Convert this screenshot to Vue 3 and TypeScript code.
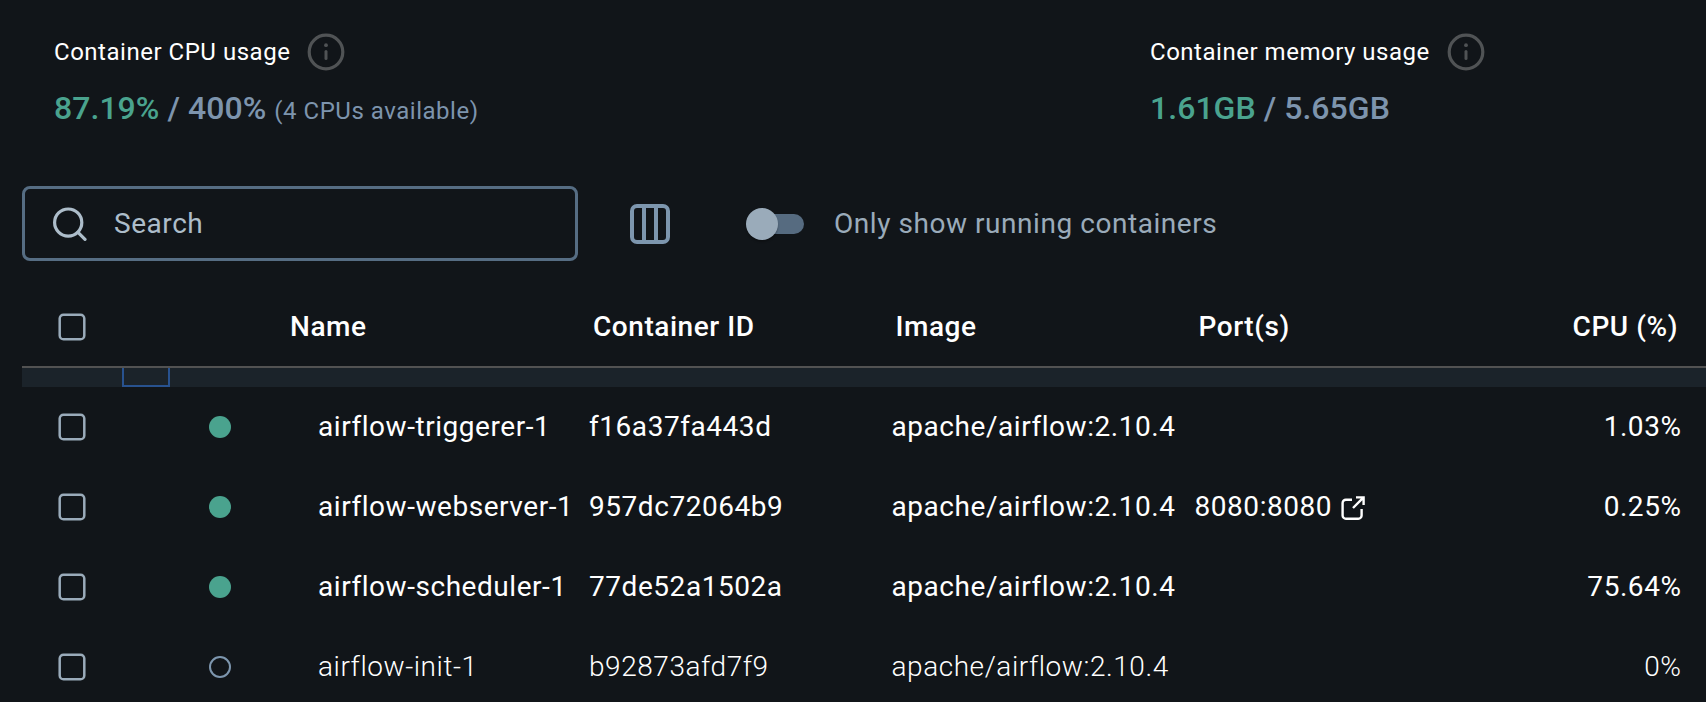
<script setup lang="ts">
interface ContainerRow {
  name: string
  id: string
  image: string
  port: string
  cpu: string
  running: boolean
}

const usages = [
  { title: 'Container CPU usage', used: '87.19%', total: '400%', note: '(4 CPUs available)' },
  { title: 'Container memory usage', used: '1.61GB', total: '5.65GB', note: '' },
]

const rows: ContainerRow[] = [
  { name: 'airflow-triggerer-1', id: 'f16a37fa443d', image: 'apache/airflow:2.10.4', port: '', cpu: '1.03%', running: true },
  { name: 'airflow-webserver-1', id: '957dc72064b9', image: 'apache/airflow:2.10.4', port: '8080:8080', cpu: '0.25%', running: true },
  { name: 'airflow-scheduler-1', id: '77de52a1502a', image: 'apache/airflow:2.10.4', port: '', cpu: '75.64%', running: true },
  { name: 'airflow-init-1', id: 'b92873afd7f9', image: 'apache/airflow:2.10.4', port: '', cpu: '0%', running: false },
]
</script>

<template>
  <main class="page">
    <section class="usages">
      <div v-for="u in usages" :key="u.title" class="usage">
        <div class="usage-title">
          <span>{{ u.title }}</span>
          <svg class="info" width="38" height="38" viewBox="0 0 38 38" fill="none">
            <circle cx="19" cy="19" r="16.8" stroke="currentColor" stroke-width="3.2" />
            <circle cx="19" cy="12.2" r="1.9" fill="currentColor" />
            <path d="M19 18.6v7" stroke="currentColor" stroke-width="3" stroke-linecap="round" />
          </svg>
        </div>
        <div class="usage-value">
          <span class="used">{{ u.used }}</span> / {{ u.total }}
          <span v-if="u.note" class="note">{{ u.note }}</span>
        </div>
      </div>
    </section>

    <section class="toolbar">
      <div class="search">
        <svg width="34" height="34" viewBox="0 0 34 34" fill="none" stroke="currentColor" stroke-width="3.2" stroke-linecap="round">
          <circle cx="15.2" cy="15.6" r="13.6" />
          <path d="M25 25.4l7 7" />
        </svg>
        <span>Search</span>
      </div>
      <svg class="columns" width="40" height="40" viewBox="0 0 40 40" fill="none" stroke="currentColor" stroke-width="4">
        <rect x="2" y="2" width="36" height="36" rx="5" />
        <path d="M14 2v36M26 2v36" />
      </svg>
      <div class="switch"><span class="thumb"></span></div>
      <span class="switch-label">Only show running containers</span>
    </section>

    <section class="table">
      <div class="row head">
        <svg class="check" width="28" height="28" viewBox="0 0 28 28" fill="none">
          <rect x="1.7" y="1.7" width="24.6" height="24.6" rx="3.8" stroke="currentColor" stroke-width="2.5" />
        </svg>
        <span></span>
        <span class="h-name">Name</span>
        <span class="h-text">Container ID</span>
        <span class="h-text">Image</span>
        <span class="h-text">Port(s)</span>
        <span class="h-cpu">CPU (%)</span>
      </div>
      <div class="band"><span class="focus"></span></div>
      <div v-for="r in rows" :key="r.id" class="row" :class="{ stopped: !r.running }">
        <svg class="check" width="28" height="28" viewBox="0 0 28 28" fill="none">
          <rect x="1.7" y="1.7" width="24.6" height="24.6" rx="3.8" stroke="currentColor" stroke-width="2.5" />
        </svg>
        <span class="dot"></span>
        <span class="cell">{{ r.name }}</span>
        <span class="cell">{{ r.id }}</span>
        <span class="cell">{{ r.image }}</span>
        <span class="cell port">
          <template v-if="r.port">
            <span>{{ r.port }}</span>
            <svg class="open" width="24" height="24" viewBox="0 0 24 24" fill="none" stroke="currentColor" stroke-width="2.4">
              <path d="M11 3.7H4.9a3.3 3.3 0 0 0-3.3 3.3v12.4a3.3 3.3 0 0 0 3.3 3.3h12.4a3.3 3.3 0 0 0 3.3-3.3V13" />
              <path d="M15 1.4h7.6V9M22.3 1.7L12 12" />
            </svg>
          </template>
        </span>
        <span class="cell cpu">{{ r.cpu }}</span>
      </div>
    </section>
  </main>
</template>

<style>
body {
  background: #111519;
}
</style>

<style scoped>
.page {
  box-sizing: border-box;
  width: 1706px;
  height: 702px;
  overflow: hidden;
  background: #111519;
  color: #fff;
  font-family: Roboto, "Liberation Sans", sans-serif;
  font-size: 28px;
  letter-spacing: 0.55px;
  white-space: nowrap;
}
.usages {
  display: grid;
  grid-template-columns: 1096px 1fr;
  padding: 32px 0 0 54px;
  height: 154px;
}
.usage-title {
  display: flex;
  align-items: center;
  gap: 17px;
  height: 40px;
  font-size: 24px;
  letter-spacing: 0.52px;
}
.info {
  color: #505355;
}
.usage-value {
  margin-top: 16px;
  line-height: 40px;
  font-size: 32px;
  font-weight: 500;
  letter-spacing: 0.04px;
  color: #7d94ad;
}
.used {
  color: #4aa38e;
}
.note {
  font-size: 24px;
  font-weight: 400;
  letter-spacing: 0.53px;
}
.toolbar {
  display: flex;
  align-items: center;
  height: 75px;
  padding-left: 22px;
}
.search {
  box-sizing: border-box;
  display: flex;
  align-items: center;
  gap: 27px;
  width: 556px;
  height: 75px;
  padding-left: 28px;
  border: 3px solid #566d83;
  border-radius: 8px;
  color: #adbdca;
}
.columns {
  margin-left: 52px;
  color: #7d96ae;
}
.switch {
  display: flex;
  align-items: center;
  width: 56px;
  height: 20px;
  margin-left: 78px;
  border-radius: 10px;
  background: #566b80;
}
.thumb {
  width: 32px;
  height: 32px;
  margin-left: -2px;
  border-radius: 50%;
  background: #9aabba;
  box-shadow: 0 2px 2px rgba(0, 0, 0, 0.25);
}
.switch-label {
  margin-left: 30px;
  color: #9aabba;
}
.table {
  padding-left: 22px;
}
.row {
  display: grid;
  grid-template-columns: 187px 109px 271px 302.5px 303px 300px 187px;
  align-items: center;
  height: 80px;
}
.head {
  height: 79px;
  margin-top: 26px;
  font-weight: 500;
}
.check {
  margin-left: 36px;
  color: #9aabba;
}
.head .check {
  margin-top: 1px;
}
.band {
  box-sizing: border-box;
  height: 21px;
  border-top: 2px solid #525252;
  background: #1b232a;
}
.focus {
  display: block;
  box-sizing: border-box;
  width: 48px;
  height: 19px;
  margin-left: 100px;
  border: 2px solid #28528f;
  border-top: 0;
}
.cell {
  padding-bottom: 1px;
}
.h-name {
  margin-left: -28px;
}
.h-text {
  margin-left: 4px;
}
.h-cpu,
.cpu {
  text-align: right;
}
.h-cpu {
  padding-right: 3.5px;
}
.dot {
  box-sizing: border-box;
  width: 22px;
  height: 22px;
  border-radius: 50%;
  background: #4aa38e;
}
.stopped {
  font-weight: 300;
}
.stopped .dot {
  border: 2px solid #7d96ae;
  background: none;
}
.port {
  display: flex;
  align-items: center;
  gap: 8.5px;
}
.open {
  margin-top: 3px;
}
</style>
